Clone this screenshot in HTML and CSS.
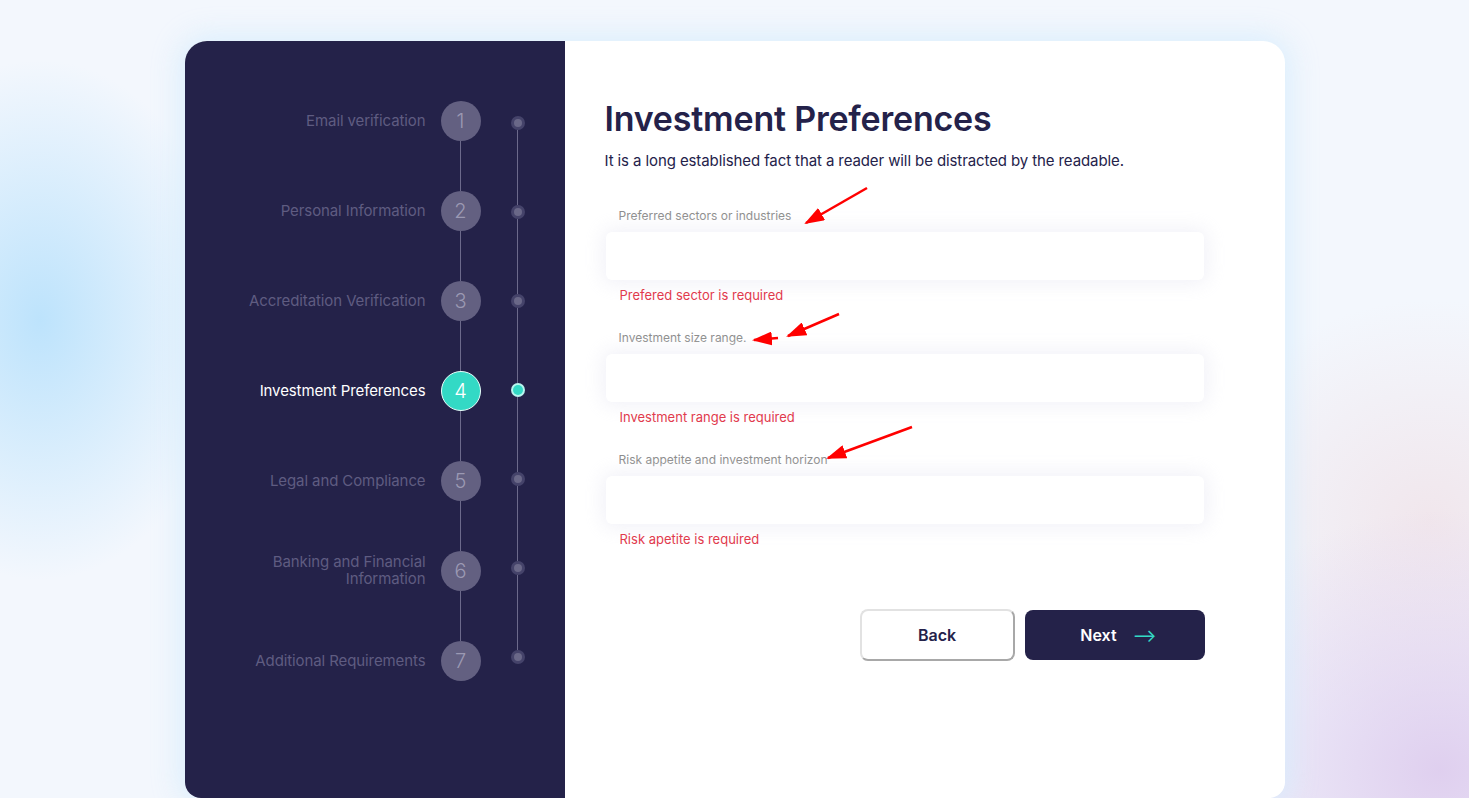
FILE: index.html
```html
<!DOCTYPE html>
<html lang="en">
<head>
<meta charset="utf-8">
<title>Investment Preferences</title>
<link rel="stylesheet" href="styles.css">
</head>
<body>
<div class="page">
  <div class="card">
    <aside class="sidebar">
      <div class="steps">
        <div class="step"><span class="step-label">Email verification</span><span class="step-num">1</span></div>
        <div class="connector"></div>
        <div class="step"><span class="step-label">Personal Information</span><span class="step-num">2</span></div>
        <div class="connector"></div>
        <div class="step"><span class="step-label">Accreditation Verification</span><span class="step-num">3</span></div>
        <div class="connector"></div>
        <div class="step active"><span class="step-label">Investment Preferences</span><span class="step-num">4</span></div>
        <div class="connector"></div>
        <div class="step"><span class="step-label">Legal and Compliance</span><span class="step-num">5</span></div>
        <div class="connector"></div>
        <div class="step"><span class="step-label">Banking and Financial Information</span><span class="step-num">6</span></div>
        <div class="connector"></div>
        <div class="step"><span class="step-label">Additional Requirements</span><span class="step-num">7</span></div>
      </div>
      <div class="rail">
        <span class="dot"></span><span class="seg"></span>
        <span class="dot"></span><span class="seg"></span>
        <span class="dot"></span><span class="seg"></span>
        <span class="dot active"></span><span class="seg"></span>
        <span class="dot"></span><span class="seg"></span>
        <span class="dot"></span><span class="seg"></span>
        <span class="dot"></span>
      </div>
    </aside>
    <main class="content">
      <h1 class="title">Investment Preferences</h1>
      <p class="subtitle">It is a long established fact that a reader will be distracted by the readable.</p>
      <form class="form">
        <div class="field">
          <label class="field-label">Preferred sectors or industries</label>
          <input class="field-input" type="text">
          <span class="field-error">Prefered sector is required</span>
        </div>
        <div class="field">
          <label class="field-label">Investment size range.</label>
          <input class="field-input" type="text">
          <span class="field-error">Investment range is required</span>
        </div>
        <div class="field">
          <label class="field-label">Risk appetite and investment horizon</label>
          <input class="field-input" type="text">
          <span class="field-error">Risk apetite is required</span>
        </div>
        <div class="actions">
          <button type="button" class="btn btn-back">Back</button>
          <button type="button" class="btn btn-next">Next <span class="arrow">&#x27F6;</span></button>
        </div>
      </form>
      <svg class="annotations" width="720" height="757" viewBox="0 0 720 757">
        <defs>
          <marker id="ah" markerUnits="userSpaceOnUse" markerWidth="20" markerHeight="14" refX="18" refY="7" orient="auto">
            <path d="M0,0 L20,7 L0,14 Z" fill="#ff0000"/>
          </marker>
        </defs>
        <line x1="302" y1="147" x2="241" y2="182" stroke="#ff0000" stroke-width="2.5" marker-end="url(#ah)"/>
        <line x1="274" y1="273" x2="223" y2="295" stroke="#ff0000" stroke-width="2.5" marker-end="url(#ah)"/>
        <line x1="213" y1="297" x2="189" y2="299" stroke="#ff0000" stroke-width="2.5" marker-end="url(#ah)"/>
        <line x1="347" y1="386" x2="263" y2="417" stroke="#ff0000" stroke-width="2.5" marker-end="url(#ah)"/>
      </svg>
    </main>
  </div>
</div>
</body>
</html>
```
FILE: styles.css
```css
* { box-sizing: border-box; }
html, body { margin: 0; padding: 0; }
body {
  font-family: "Inter", "Noto Sans", sans-serif;
  background:
    radial-gradient(ellipse 190px 260px at 40px 320px, rgba(186, 226, 252, 0.95), rgba(196, 230, 252, 0) 100%),
    radial-gradient(ellipse 280px 260px at 1440px 770px, rgba(222, 205, 238, 0.95), rgba(226, 210, 240, 0) 100%),
    radial-gradient(ellipse 240px 220px at 1430px 520px, rgba(240, 226, 232, 0.8), rgba(240, 226, 232, 0) 100%),
    #f3f7fd;
  min-height: 798px;
  overflow: hidden;
}
.page {
  display: flex;
  justify-content: center;
  padding-top: 41px;
}
.card {
  width: 1100px;
  height: 757px;
  display: flex;
  border-radius: 22px 22px 16px 16px;
  background: #ffffff;
  box-shadow: 0 0 28px 6px rgba(214, 236, 252, 0.8);
  overflow: hidden;
}
.sidebar {
  width: 380px;
  flex-shrink: 0;
  background: #242249;
  display: flex;
  padding-left: 56px;
}
.steps {
  display: flex;
  flex-direction: column;
  padding-top: 60px;
}
.step {
  display: flex;
  align-items: center;
  gap: 15px;
  height: 40px;
}
.step-label {
  width: 185px;
  text-align: right;
  font-size: 15px;
  line-height: 17px;
  letter-spacing: -0.1px;
  padding-bottom: 2px;
  color: #5f5c81;
}
.step-num {
  width: 40px;
  height: 40px;
  border-radius: 50%;
  background: #636081;
  color: #9b99b3;
  font-size: 20px;
  font-weight: 300;
  display: flex;
  align-items: center;
  justify-content: center;
  flex-shrink: 0;
}
.step.active .step-label { color: #ffffff; }
.step.active .step-num {
  background: #33d9c5;
  color: #ffffff;
  border: 1px solid #e8fffb;
}
.connector {
  width: 1px;
  height: 50px;
  margin-left: 219px;
  background: #6c6a8b;
}
.rail {
  display: flex;
  flex-direction: column;
  align-items: center;
  padding-top: 75px;
  margin-left: 30px;
}
.dot {
  width: 14px;
  height: 14px;
  border-radius: 50%;
  background: #45436a;
  display: flex;
  align-items: center;
  justify-content: center;
}
.dot::after {
  content: "";
  width: 8px;
  height: 8px;
  border-radius: 50%;
  background: #6a6888;
}
.dot.active { background: #b8f6ef; }
.dot.active::after { width: 10px; height: 10px; background: #33d9c5; }
.seg {
  width: 1px;
  height: 75px;
  background: #6c6a8b;
}
.content {
  position: relative;
  flex: 1;
  padding: 58px 0 0 40px;
}
.title {
  margin: 0;
  font-size: 34px;
  line-height: 40px;
  font-weight: 600;
  color: #24224a;
  letter-spacing: -0.2px;
}
.subtitle {
  margin: 12px 0 0;
  font-size: 15px;
  line-height: 20px;
  letter-spacing: -0.1px;
  color: #24224a;
}
.form {
  width: 600px;
  margin-top: 37px;
  display: flex;
  flex-direction: column;
  gap: 26px;
}
.field {
  display: flex;
  flex-direction: column;
}
.field-label {
  margin-left: 14px;
  font-size: 12px;
  line-height: 16px;
  color: #8b8b8b;
}
.field-input {
  margin-top: 8px;
  margin-left: 1px;
  width: 598px;
  height: 48px;
  border: none;
  border-radius: 6px;
  background: #ffffff;
  box-shadow: 0 0 18px 4px rgba(238, 238, 246, 0.75);
  outline: none;
}
.field-error {
  margin-top: 6px;
  margin-left: 15px;
  font-size: 13px;
  line-height: 18px;
  color: #e13a4d;
}
.actions {
  margin-top: 35px;
  display: flex;
  justify-content: flex-end;
  align-items: center;
  gap: 10px;
}
.btn {
  font-family: "Inter", "Noto Sans", sans-serif;
  font-size: 16px;
  font-weight: 600;
  border-radius: 8px;
  cursor: pointer;
  display: flex;
  align-items: center;
  justify-content: center;
}
.btn-back {
  width: 155px;
  height: 52px;
  background: #ffffff;
  color: #24224a;
  border: 2px solid #e2e2e2;
  border-right-color: #a8a8a8;
  border-bottom-color: #a8a8a8;
}
.btn-next {
  width: 180px;
  height: 50px;
  background: #242249;
  color: #ffffff;
  border: none;
  gap: 16px;
  padding-left: 14px;
}
.arrow {
  color: #33d9c5;
  font-weight: 400;
  font-size: 18px;
}
.annotations {
  position: absolute;
  left: 0;
  top: 0;
  pointer-events: none;
}
```
